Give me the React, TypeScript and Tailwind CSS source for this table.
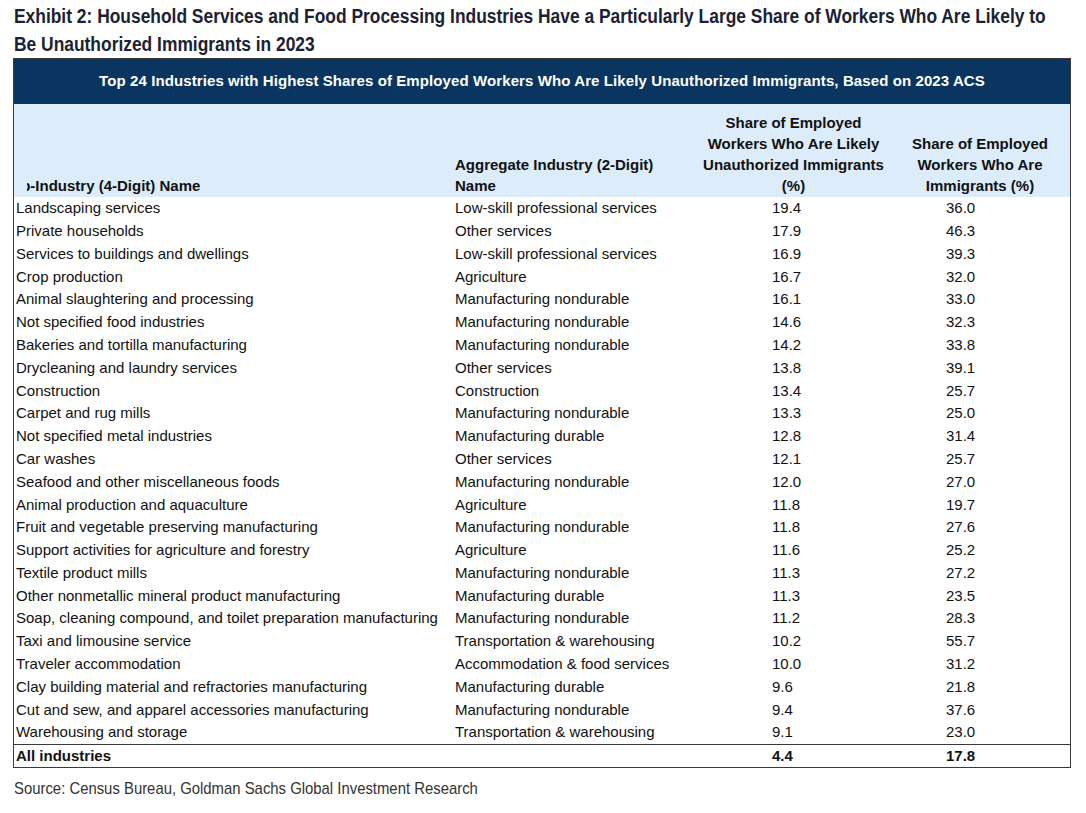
import React from "react";

const rows: [string, string, string, string][] = [
  ["Landscaping services", "Low-skill professional services", "19.4", "36.0"],
  ["Private households", "Other services", "17.9", "46.3"],
  ["Services to buildings and dwellings", "Low-skill professional services", "16.9", "39.3"],
  ["Crop production", "Agriculture", "16.7", "32.0"],
  ["Animal slaughtering and processing", "Manufacturing nondurable", "16.1", "33.0"],
  ["Not specified food industries", "Manufacturing nondurable", "14.6", "32.3"],
  ["Bakeries and tortilla manufacturing", "Manufacturing nondurable", "14.2", "33.8"],
  ["Drycleaning and laundry services", "Other services", "13.8", "39.1"],
  ["Construction", "Construction", "13.4", "25.7"],
  ["Carpet and rug mills", "Manufacturing nondurable", "13.3", "25.0"],
  ["Not specified metal industries", "Manufacturing durable", "12.8", "31.4"],
  ["Car washes", "Other services", "12.1", "25.7"],
  ["Seafood and other miscellaneous foods", "Manufacturing nondurable", "12.0", "27.0"],
  ["Animal production and aquaculture", "Agriculture", "11.8", "19.7"],
  ["Fruit and vegetable preserving manufacturing", "Manufacturing nondurable", "11.8", "27.6"],
  ["Support activities for agriculture and forestry", "Agriculture", "11.6", "25.2"],
  ["Textile product mills", "Manufacturing nondurable", "11.3", "27.2"],
  ["Other nonmetallic mineral product manufacturing", "Manufacturing durable", "11.3", "23.5"],
  ["Soap, cleaning compound, and toilet preparation manufacturing", "Manufacturing nondurable", "11.2", "28.3"],
  ["Taxi and limousine service", "Transportation & warehousing", "10.2", "55.7"],
  ["Traveler accommodation", "Accommodation & food services", "10.0", "31.2"],
  ["Clay building material and refractories manufacturing", "Manufacturing durable", "9.6", "21.8"],
  ["Cut and sew, and apparel accessories manufacturing", "Manufacturing nondurable", "9.4", "37.6"],
  ["Warehousing and storage", "Transportation & warehousing", "9.1", "23.0"],
];

const arial = "font-['Liberation_Sans',Arial,sans-serif]";
const cols = "grid grid-cols-[439px_247px_187px_183px]";

export default function App() {
  return (
    <div className="w-[1086px] h-[813px] bg-white overflow-hidden">
      <div className={`${arial} pl-[14px] pt-[2px] text-[20px] leading-[28px] font-bold text-[#1b2233] whitespace-nowrap`}>
        <div className="origin-left scale-x-[0.87]">
          Exhibit 2: Household Services and Food Processing Industries Have a Particularly Large Share of Workers Who Are Likely to
        </div>
        <div className="origin-left scale-x-[0.87]">Be Unauthorized Immigrants in 2023</div>
      </div>
      <div className={`${arial} ml-[13px] w-[1058px] border border-[#3a3a3a] text-[15px] text-[#111]`}>
        <div className="h-[45px] bg-[#0a3560] text-white font-bold flex items-center justify-center tracking-[0.1px]">
          Top 24 Industries with Highest Shares of Employed Workers Who Are Likely Unauthorized Immigrants, Based on 2023 ACS
        </div>
        <div className={`h-[93px] bg-[#dcecfb] ${cols} font-bold leading-[21px] pb-[1px]`}>
          <div className="flex items-end">
            <div className="ml-[13px] overflow-hidden whitespace-nowrap">
              <div className="ml-[-25px]">Sub-Industry (4-Digit) Name</div>
            </div>
          </div>
          <div className="flex items-end pl-[2px]">
            <div>
              Aggregate Industry (2-Digit)
              <br />
              Name
            </div>
          </div>
          <div className="flex items-end justify-center text-center">
            <div>
              Share of Employed
              <br />
              Workers Who Are Likely
              <br />
              Unauthorized Immigrants
              <br />
              (%)
            </div>
          </div>
          <div className="flex items-end justify-center text-center pl-[3px]">
            <div>
              Share of Employed
              <br />
              Workers Who Are
              <br />
              Immigrants (%)
            </div>
          </div>
        </div>
        <div>
          {rows.map((r) => (
            <div key={r[0]} className={`h-[22.8px] ${cols} items-center whitespace-nowrap`}>
              <div className="pl-[2px]">{r[0]}</div>
              <div className="pl-[2px]">{r[1]}</div>
              <div className="pl-[72px]">{r[2]}</div>
              <div className="pl-[59px]">{r[3]}</div>
            </div>
          ))}
        </div>
        <div className={`h-[23px] border-t border-[#3a3a3a] ${cols} items-center font-bold`}>
          <div className="pl-[2px]">All industries</div>
          <div></div>
          <div className="pl-[72px]">4.4</div>
          <div className="pl-[59px]">17.8</div>
        </div>
      </div>
      <div className={`${arial} pl-[14px] mt-[10px] text-[17px] leading-[22px] text-[#333] whitespace-nowrap`}>
        <div className="origin-left scale-x-[0.875]">Source: Census Bureau, Goldman Sachs Global Investment Research</div>
      </div>
    </div>
  );
}
